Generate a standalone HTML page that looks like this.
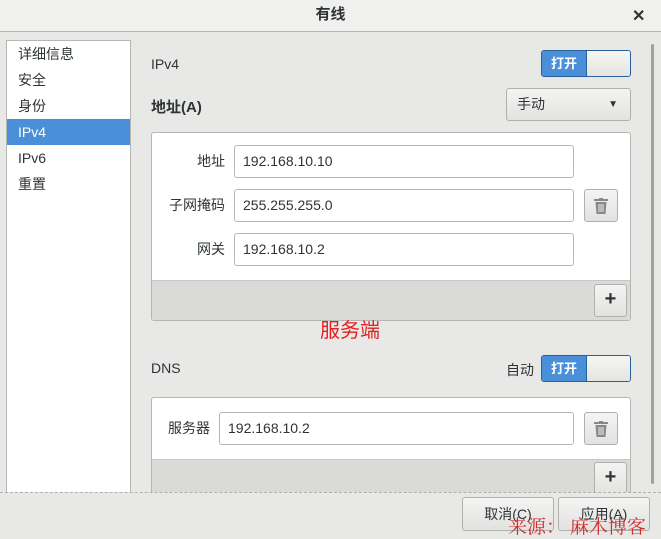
<!DOCTYPE html>
<html><head><meta charset="utf-8"><style>
*{box-sizing:border-box;margin:0;padding:0}
body{width:661px;height:535px;overflow:hidden;background:#e8e8e7;font-family:"Liberation Sans","Noto Sans CJK SC",sans-serif;font-size:14px;color:#2e3436;position:relative}
.a{position:absolute}
.title{left:0;top:0;width:661px;height:32px;background:#f0f0ef;border-bottom:1px solid #b6b6b3;text-align:center;line-height:30px;font-size:15px;font-weight:bold}
.side{left:6px;top:40px;width:125px;height:453px;background:#fff;border:1px solid #b6b6b3}
.side div{height:26px;line-height:26px;padding-left:11px}
.sel{background:#4a90d9;color:#fff}
.inp{background:#fff;border:1px solid #b6b6b3;border-radius:3px;height:33px;line-height:31px;padding-left:8px}
.btn{background:linear-gradient(#f4f4f3,#e2e2e0);border:1px solid #b0b0ad;border-radius:3px;text-align:center}
.tog{width:90px;height:27px;border:1px solid #2a6099;border-radius:3px;overflow:hidden;display:flex}
.tog b{width:44px;background:#4a90d9;color:#fff;font-size:13px;line-height:25px;text-align:center}
.tog i{flex:1;background:linear-gradient(#f6f6f5,#e4e4e2);border-left:1px solid #2a6099}
.box{background:#fff;border:1px solid #b6b6b3;border-radius:3px}
.lbl{text-align:right;line-height:33px}
.tr{display:flex;align-items:center;justify-content:center}
</style></head><body>
<div class="a title">有线</div>
<div class="a" style="left:632px;top:6px;font-size:16px;font-weight:bold">✕</div>
<div class="a side"><div>详细信息</div><div>安全</div><div>身份</div><div class="sel">IPv4</div><div>IPv6</div><div>重置</div></div>
<div class="a" style="left:651px;top:44px;width:3px;height:440px;background:#a0a0a0;border-radius:2px"></div>
<div class="a" style="left:151px;top:56px;font-size:14px">IPv4</div>
<div class="a tog" style="left:541px;top:50px"><b>打开</b><i></i></div>
<div class="a" style="left:151px;top:96px;font-size:15px;font-weight:bold">地址(A)</div>
<div class="a btn" style="left:506px;top:88px;width:125px;height:33px;text-align:left;padding-left:10px;line-height:31px">手动<span style="position:absolute;right:12px;top:0;font-size:10px">▼</span></div>
<div class="a box" style="left:151px;top:132px;width:480px;height:189px;overflow:hidden"><div class="a" style="left:0;top:147px;width:480px;height:42px;background:#dadad9;border-top:1px solid #c8c8c6"></div></div>
<div class="a lbl" style="left:150px;top:145px;width:75px">地址</div>
<div class="a lbl" style="left:150px;top:189px;width:75px">子网掩码</div>
<div class="a lbl" style="left:150px;top:233px;width:75px">网关</div>
<div class="a inp" style="left:234px;top:145px;width:340px">192.168.10.10</div>
<div class="a inp" style="left:234px;top:189px;width:340px">255.255.255.0</div>
<div class="a inp" style="left:234px;top:233px;width:340px">192.168.10.2</div>
<div class="a btn tr" style="left:584px;top:189px;width:34px;height:33px"><svg width="14" height="16" viewBox="0 0 14 16"><rect x="0" y="1" width="14" height="2" fill="#888"/><rect x="5" y="0" width="4" height="2" fill="#888"/><path d="M1.5 4h11l-1 12h-9z" fill="#888"/><path d="M5 6v8M7 6v8M9 6v8" stroke="#eee" stroke-width="1"/></svg></div>
<div class="a btn" style="left:594px;top:284px;width:33px;height:33px;line-height:29px;font-size:20px;font-weight:bold">+</div>
<div class="a" style="left:320px;top:314px;font-size:20px;color:#e02020">服务端</div>
<div class="a" style="left:151px;top:360px;font-size:14px">DNS</div>
<div class="a" style="left:506px;top:360px">自动</div>
<div class="a tog" style="left:541px;top:355px"><b>打开</b><i></i></div>
<div class="a box" style="left:151px;top:397px;width:480px;height:100px;overflow:hidden"><div class="a" style="left:0;top:61px;width:480px;height:40px;background:#dadad9;border-top:1px solid #c8c8c6"></div></div>
<div class="a lbl" style="left:150px;top:412px;width:60px">服务器</div>
<div class="a inp" style="left:219px;top:412px;width:355px">192.168.10.2</div>
<div class="a btn tr" style="left:584px;top:412px;width:34px;height:33px"><svg width="14" height="16" viewBox="0 0 14 16"><rect x="0" y="1" width="14" height="2" fill="#888"/><rect x="5" y="0" width="4" height="2" fill="#888"/><path d="M1.5 4h11l-1 12h-9z" fill="#888"/><path d="M5 6v8M7 6v8M9 6v8" stroke="#eee" stroke-width="1"/></svg></div>
<div class="a btn" style="left:594px;top:462px;width:33px;height:33px;line-height:29px;font-size:20px;font-weight:bold">+</div>
<div class="a" style="left:0;top:492px;width:661px;height:43px;background:#e8e8e7;border-top:1px dashed #b0b0ad"></div>
<div class="a btn" style="left:462px;top:497px;width:92px;height:34px;line-height:32px">取消(C)</div>
<div class="a btn" style="left:558px;top:497px;width:92px;height:34px;line-height:32px">应用(A)</div>
<div class="a" style="left:508px;top:512px;font-size:19px;color:#d03030;font-family:'Noto Serif CJK SC',serif;white-space:nowrap">来源：&nbsp;麻木博客</div>
</body></html>
